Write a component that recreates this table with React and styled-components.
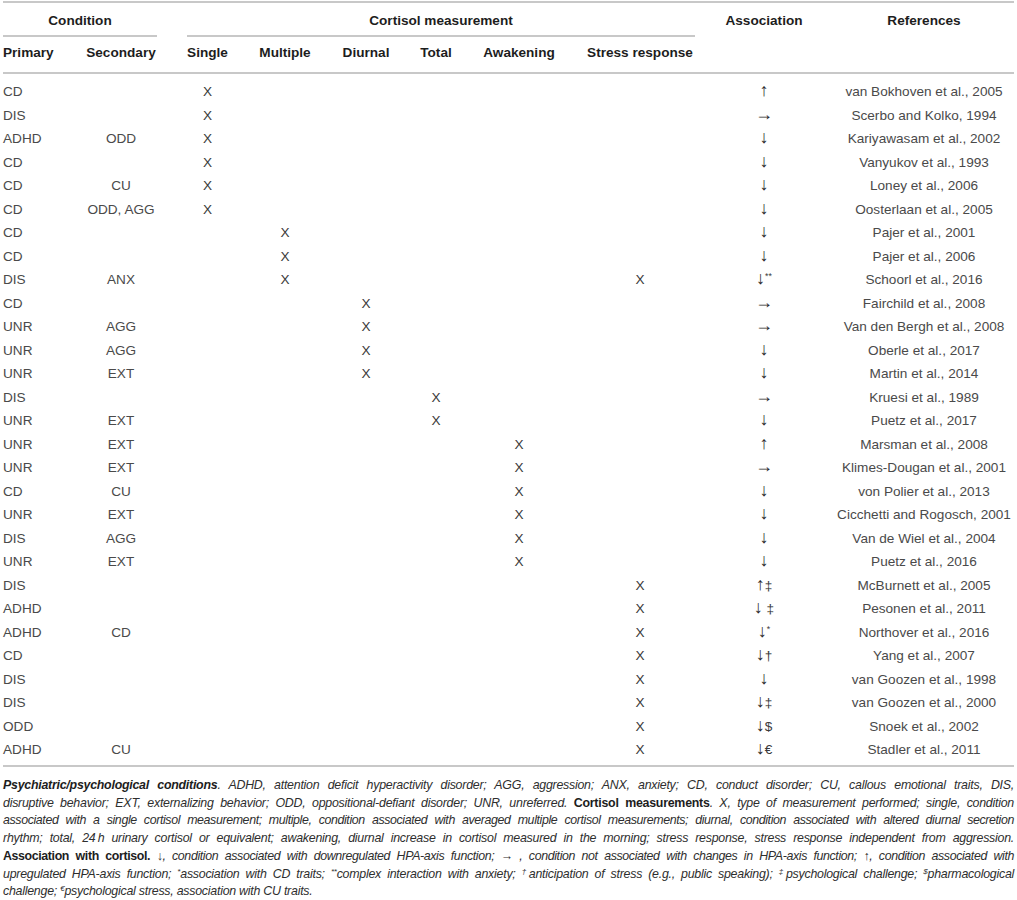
import React from 'react';
import styled, { createGlobalStyle } from 'styled-components';

const GlobalStyle = createGlobalStyle`
  html, body { margin: 0; padding: 0; background: #fff; }
  body { font-family: "Liberation Sans", Arial, sans-serif; }
`;

const COLS = '70px 96px 77px 78px 84px 56px 110px 132px 116px 1fr';
const LINE = '#c8c8c8';

const Page = styled.div`
  width: 1011px;
  padding: 1px 3px 0;
`;

const Table = styled.div`
  border-top: 2px solid ${LINE};
  border-bottom: 2px solid ${LINE};
  font-size: 13.6px;
`;

const Head = styled.div`
  display: grid;
  grid-template-columns: ${COLS};
  padding-bottom: 5px;
  border-bottom: 2px solid ${LINE};
  color: #1d1d1d;
  font-weight: 700;
`;

const GroupHead = styled.div`
  grid-row: 1;
  grid-column: ${(p) => p.$col};
  margin: ${(p) => p.$margin || '0'};
  padding-top: 4px;
  line-height: 28px;
  text-align: center;
  border-bottom: ${(p) => (p.$rule ? `2px solid ${LINE}` : '2px solid transparent')};
  padding-left: ${(p) => p.$pl || '0'};
`;

const SubHead = styled.div`
  grid-row: 2;
  padding-top: 2px;
  line-height: 28px;
  text-align: ${(p) => (p.$left ? 'left' : 'center')};
`;

const Body = styled.div`
  padding: 6px 0 3.5px;
  color: #4a4a4a;
`;

const Row = styled.div`
  display: grid;
  grid-template-columns: ${COLS};
  height: 23.5px;
  line-height: 23.5px;
`;

const Cell = styled.div`
  text-align: ${(p) => (p.$left ? 'left' : 'center')};
  padding-left: ${(p) => p.$pl || '0'};
  white-space: nowrap;
`;

const Mark = styled(Cell)`
  color: #3a3a3a;
`;

const Arrow = styled.span`
  font-size: 18px;
  line-height: 1;
  color: #2a2a2a;
`;

const Sup = styled.sup`
  font-size: 0.65em;
  line-height: 0;
  vertical-align: 0.55em;
`;

const Note = styled.div`
  padding-top: 10px;
  font-size: 12.4px;
  line-height: 17.7px;
  font-style: italic;
  color: #2e2e2e;
`;

const NoteLine = styled.span`
  display: block;
  white-space: nowrap;
  text-align: justify;
  text-align-last: ${(p) => (p.$last ? 'left' : 'justify')};
  letter-spacing: ${(p) => (p.$tight ? '-0.38px' : '-0.25px')};
`;

const Strong = styled.b`
  font-weight: 700;
  font-style: ${(p) => (p.$italic ? 'italic' : 'normal')};
  color: #1d1d1d;
`;

const MEAS = ['single', 'multiple', 'diurnal', 'total', 'awakening', 'stress'];

const rows = [
  ['CD', '', ['single'], '↑', '', '', 'van Bokhoven et al., 2005'],
  ['DIS', '', ['single'], '→', '', '', 'Scerbo and Kolko, 1994'],
  ['ADHD', 'ODD', ['single'], '↓', '', '', 'Kariyawasam et al., 2002'],
  ['CD', '', ['single'], '↓', '', '', 'Vanyukov et al., 1993'],
  ['CD', 'CU', ['single'], '↓', '', '', 'Loney et al., 2006'],
  ['CD', 'ODD, AGG', ['single'], '↓', '', '', 'Oosterlaan et al., 2005'],
  ['CD', '', ['multiple'], '↓', '', '', 'Pajer et al., 2001'],
  ['CD', '', ['multiple'], '↓', '', '', 'Pajer et al., 2006'],
  ['DIS', 'ANX', ['multiple', 'stress'], '↓', '', '**', 'Schoorl et al., 2016'],
  ['CD', '', ['diurnal'], '→', '', '', 'Fairchild et al., 2008'],
  ['UNR', 'AGG', ['diurnal'], '→', '', '', 'Van den Bergh et al., 2008'],
  ['UNR', 'AGG', ['diurnal'], '↓', '', '', 'Oberle et al., 2017'],
  ['UNR', 'EXT', ['diurnal'], '↓', '', '', 'Martin et al., 2014'],
  ['DIS', '', ['total'], '→', '', '', 'Kruesi et al., 1989'],
  ['UNR', 'EXT', ['total'], '↓', '', '', 'Puetz et al., 2017'],
  ['UNR', 'EXT', ['awakening'], '↑', '', '', 'Marsman et al., 2008'],
  ['UNR', 'EXT', ['awakening'], '→', '', '', 'Klimes-Dougan et al., 2001'],
  ['CD', 'CU', ['awakening'], '↓', '', '', 'von Polier et al., 2013'],
  ['UNR', 'EXT', ['awakening'], '↓', '', '', 'Cicchetti and Rogosch, 2001'],
  ['DIS', 'AGG', ['awakening'], '↓', '', '', 'Van de Wiel et al., 2004'],
  ['UNR', 'EXT', ['awakening'], '↓', '', '', 'Puetz et al., 2016'],
  ['DIS', '', ['stress'], '↑', '‡', '', 'McBurnett et al., 2005'],
  ['ADHD', '', ['stress'], '↓', ' ‡', '', 'Pesonen et al., 2011'],
  ['ADHD', 'CD', ['stress'], '↓', '', '*', 'Northover et al., 2016'],
  ['CD', '', ['stress'], '↓', '†', '', 'Yang et al., 2007'],
  ['DIS', '', ['stress'], '↓', '', '', 'van Goozen et al., 1998'],
  ['DIS', '', ['stress'], '↓', '‡', '', 'van Goozen et al., 2000'],
  ['ODD', '', ['stress'], '↓', '$', '', 'Snoek et al., 2002'],
  ['ADHD', 'CU', ['stress'], '↓', '€', '', 'Stadler et al., 2011'],
];

export default function App() {
  return (
    <Page>
      <GlobalStyle />
      <Table>
        <Head>
          <GroupHead $col="1 / 3" $margin="0 12px 0 0" $rule>Condition</GroupHead>
          <GroupHead $col="3 / 9" $margin="0 11px 0 18px" $rule>Cortisol measurement</GroupHead>
          <GroupHead $col="9 / 10">Association</GroupHead>
          <GroupHead $col="10 / 11" $pl="12px">References</GroupHead>
          <SubHead $left>Primary</SubHead>
          <SubHead>Secondary</SubHead>
          <SubHead>Single</SubHead>
          <SubHead>Multiple</SubHead>
          <SubHead>Diurnal</SubHead>
          <SubHead>Total</SubHead>
          <SubHead>Awakening</SubHead>
          <SubHead>Stress response</SubHead>
        </Head>
        <Body>
          {rows.map(([pri, sec, meas, arrow, mark, sup, ref], i) => (
            <Row key={i}>
              <Cell $left>{pri}</Cell>
              <Cell>{sec}</Cell>
              {MEAS.map((m) => (
                <Mark key={m}>{meas.includes(m) ? 'X' : ''}</Mark>
              ))}
              <Mark>
                <Arrow>{arrow}</Arrow>
                {mark}
                {sup && <Sup>{sup}</Sup>}
              </Mark>
              <Cell $pl="12px">{ref}</Cell>
            </Row>
          ))}
        </Body>
      </Table>
      <Note>
        <NoteLine>
          <Strong $italic>Psychiatric/psychological conditions</Strong>. ADHD, attention deficit
          hyperactivity disorder; AGG, aggression; ANX, anxiety; CD, conduct disorder; CU, callous
          emotional traits, DIS,
        </NoteLine>
        <NoteLine>
          disruptive behavior; EXT, externalizing behavior; ODD, oppositional-defiant disorder; UNR,
          unreferred. <Strong>Cortisol measurements</Strong>. X, type of measurement performed;
          single, condition
        </NoteLine>
        <NoteLine $tight>
          associated with a single cortisol measurement; multiple, condition associated with
          averaged multiple cortisol measurements; diurnal, condition associated with altered
          diurnal secretion
        </NoteLine>
        <NoteLine>
          rhythm; total, 24&#8201;h urinary cortisol or equivalent; awakening, diurnal increase in
          cortisol measured in the morning; stress response, stress response independent from
          aggression.
        </NoteLine>
        <NoteLine $tight>
          <Strong>Association with cortisol.</Strong> ↓, condition associated with downregulated
          HPA-axis function; → , condition not associated with changes in HPA-axis function; ↑,
          condition associated with
        </NoteLine>
        <NoteLine>
          upregulated HPA-axis function; <Sup>*</Sup>association with CD traits; <Sup>**</Sup>
          complex interaction with anxiety; <Sup>†</Sup>anticipation of stress (e.g., public
          speaking); <Sup>‡</Sup>psychological challenge; <Sup>$</Sup>pharmacological
        </NoteLine>
        <NoteLine $last>
          challenge; <Sup>€</Sup>psychological stress, association with CU traits.
        </NoteLine>
      </Note>
    </Page>
  );
}
